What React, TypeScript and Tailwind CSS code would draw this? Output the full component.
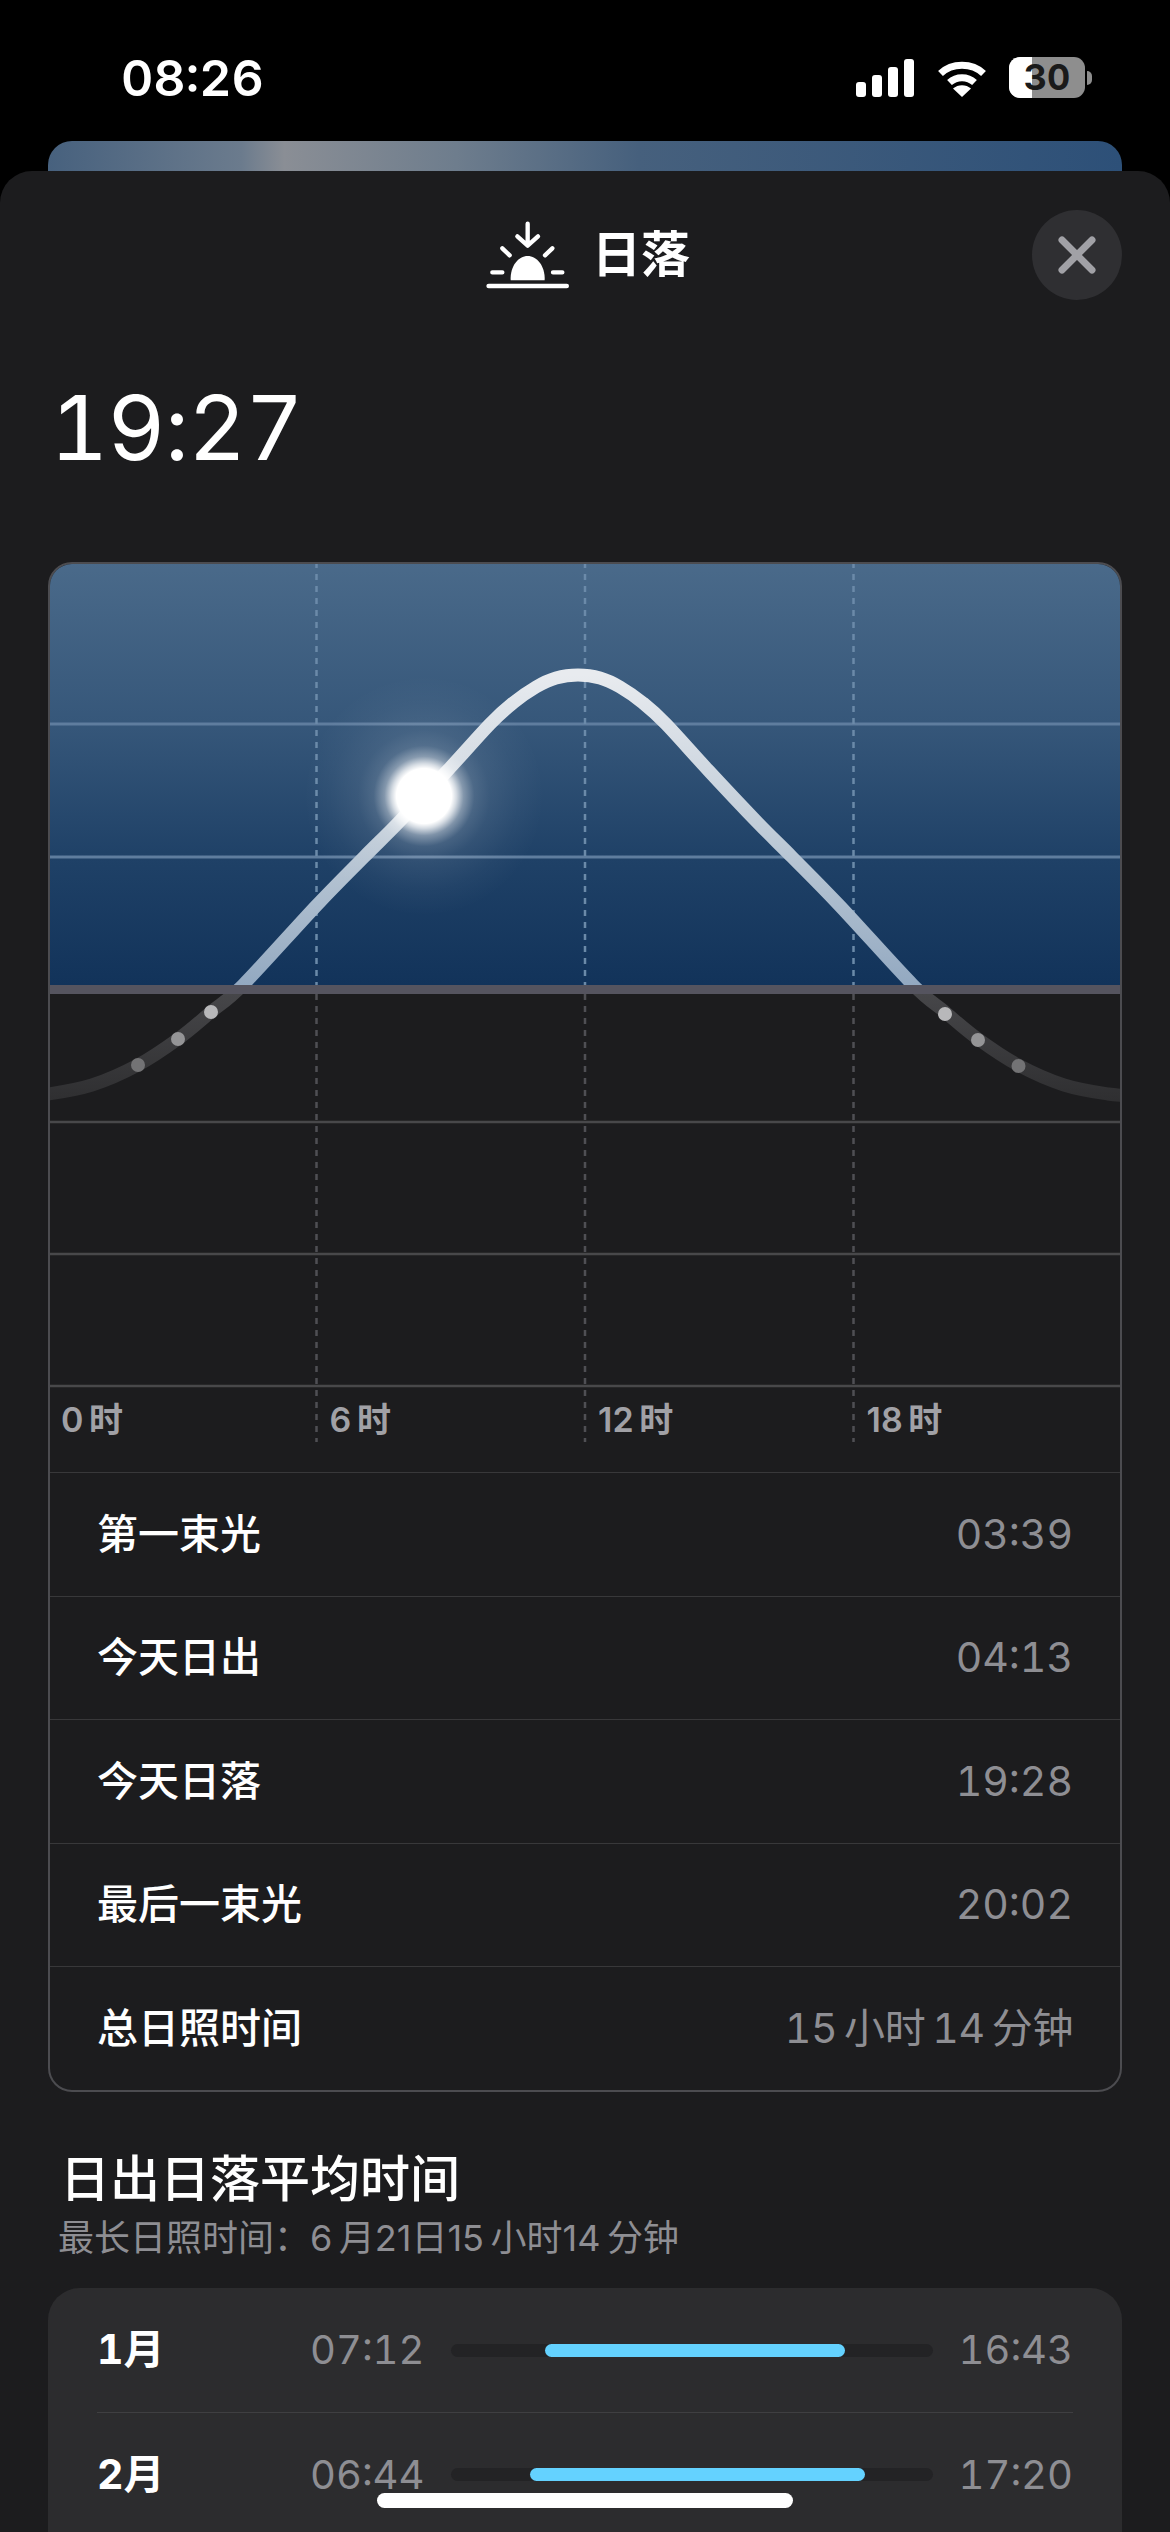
import React from "react";

const half: [number, number][] = [
  [0, 675], [22, 678], [42, 687], [65, 703], [88, 724], [130, 770], [180, 823], [214, 857], [261, 905], [335, 985], [367, 1012], [400, 1039], [440, 1065], [486, 1085], [530, 1094], [560, 1096],
];
const CX = 578;
const pts: [number, number][] = [
  ...half.slice().reverse().map(([d, y]) => [CX - d, y] as [number, number]),
  ...half.slice(1).map(([d, y]) => [CX + d, y] as [number, number]),
];
function spline(p: [number, number][]) {
  let d = `M${p[0][0]} ${p[0][1]}`;
  for (let i = 0; i < p.length - 1; i++) {
    const a = p[Math.max(i - 1, 0)], b = p[i], c = p[i + 1], e = p[Math.min(i + 2, p.length - 1)];
    d += ` C${(b[0] + (c[0] - a[0]) / 6).toFixed(1)} ${(b[1] + (c[1] - a[1]) / 6).toFixed(1)} ${(c[0] - (e[0] - b[0]) / 6).toFixed(1)} ${(c[1] - (e[1] - b[1]) / 6).toFixed(1)} ${c[0]} ${c[1]}`;
  }
  return d;
}
const curve = spline(pts);

function Chart() {
  return (
    <svg viewBox="48 562 1074 880" className="block w-[1074px] h-[880px]">
      <defs>
        <linearGradient id="sky" x1="0" y1="562" x2="0" y2="985" gradientUnits="userSpaceOnUse">
          <stop offset="0" stopColor="#4a6a8a" />
          <stop offset="0.38" stopColor="#36577a" />
          <stop offset="0.7" stopColor="#1f4167" />
          <stop offset="1" stopColor="#12335a" />
        </linearGradient>
        <linearGradient id="curveSky" x1="0" y1="675" x2="0" y2="985" gradientUnits="userSpaceOnUse">
          <stop offset="0" stopColor="#e8ebef" />
          <stop offset="0.5" stopColor="#c0ccd8" />
          <stop offset="1" stopColor="#93a9c1" />
        </linearGradient>
        <linearGradient id="curveLow" x1="0" y1="985" x2="0" y2="1100" gradientUnits="userSpaceOnUse">
          <stop offset="0" stopColor="#48484b" />
          <stop offset="1" stopColor="#2f2f31" />
        </linearGradient>
        <radialGradient id="glow" cx="424" cy="796" r="120" gradientUnits="userSpaceOnUse">
          <stop offset="0.23" stopColor="#ffffff" stopOpacity="1" />
          <stop offset="0.27" stopColor="#ffffff" stopOpacity="0.8" />
          <stop offset="0.33" stopColor="#ffffff" stopOpacity="0.42" />
          <stop offset="0.42" stopColor="#ffffff" stopOpacity="0.16" />
          <stop offset="0.55" stopColor="#ffffff" stopOpacity="0.08" />
          <stop offset="0.78" stopColor="#ffffff" stopOpacity="0.03" />
          <stop offset="1" stopColor="#ffffff" stopOpacity="0" />
        </radialGradient>
        <clipPath id="skyClip"><rect x="48" y="562" width="1074" height="423" /></clipPath>
        <clipPath id="lowClip"><rect x="48" y="985" width="1074" height="200" /></clipPath>
      </defs>
      <rect x="48" y="562" width="1074" height="423" fill="url(#sky)" />
      <rect x="48" y="562" width="1074" height="1.5" fill="#6c87a3" />
      {[724, 857].map((y) => <rect key={y} x="48" y={y - 1.5} width="1074" height="3" fill="#5f7d9e" />)}
      {[1122, 1254, 1386].map((y) => <rect key={y} x="48" y={y - 1.25} width="1074" height="2.5" fill="#48484a" />)}
      {[316.5, 585, 853.5].map((x) => (
        <g key={x}>
          <line x1={x} x2={x} y1="562" y2="985" stroke="#6b8aa9" strokeWidth="2.5" strokeDasharray="6 6" />
          <line x1={x} x2={x} y1="994" y2="1442" stroke="#4f4f54" strokeWidth="2.5" strokeDasharray="6 6" />
        </g>
      ))}
      <path d={curve} fill="none" stroke="url(#curveSky)" strokeWidth="13" clipPath="url(#skyClip)" />
      <path d={curve} fill="none" stroke="url(#curveLow)" strokeWidth="13" clipPath="url(#lowClip)" />
      <rect x="48" y="985" width="1074" height="9" fill="#55545f" />
      <circle cx="138" cy="1065" r="7" fill="#737375" />
      <circle cx="178" cy="1039" r="7" fill="#949496" />
      <circle cx="211" cy="1012" r="7" fill="#b8b8ba" />
      <circle cx="945" cy="1014" r="7" fill="#b8b8ba" />
      <circle cx="978" cy="1040" r="7" fill="#949496" />
      <circle cx="1018.5" cy="1066" r="7" fill="#737375" />
      <circle cx="424" cy="796" r="120" fill="url(#glow)" />
      <circle cx="424" cy="796" r="27.5" fill="#ffffff" />
    </svg>
  );
}

function SunsetIcon() {
  return (
    <svg viewBox="80 84 252 207" className="w-[84px] h-[69px]" fill="none" stroke="#ffffff" strokeLinecap="round" strokeLinejoin="round">
      <path d="M205 92V155M174 130L205 158L236 130" strokeWidth="13" />
      <path d="M129 166L151 187M279 166L257 187M99 238H129M281 238H309" strokeWidth="13" />
      <path d="M88 279H322" strokeWidth="14" />
      <path d="M154 262C152 218 178 189 205 189C232 189 258 218 256 262Z" fill="#ffffff" stroke="none" />
    </svg>
  );
}

function StatusIcons() {
  return (
    <div className="flex items-center">
      <svg viewBox="0 0 58 38" className="w-[58px] h-[38px]" fill="#ffffff">
        <rect x="0" y="23" width="10" height="15" rx="3" />
        <rect x="16" y="16" width="10" height="22" rx="3" />
        <rect x="32" y="8" width="10" height="30" rx="3" />
        <rect x="48" y="0" width="10" height="38" rx="3" />
      </svg>
      <svg viewBox="0 0 50 38" className="w-[50px] h-[38px] ml-[23px]" fill="none" stroke="#ffffff" strokeWidth="7">
        <path d="M3.5 14.5C15 3.5 35 3.5 46.500 14.500" />
        <path d="M12.500 23.500C19.500 17 30.500 17 37.500 23.500" />
        <path d="M25 38L16 29.500C21 25 29 25 34 29.500Z" fill="#ffffff" stroke="none" />
      </svg>
      <div className="relative ml-[22px] w-[76px] h-[41px] rounded-[11px] bg-[#8e8e8e] flex items-center justify-center">
        <div className="absolute left-0 top-0 bottom-0 w-[23px] rounded-l-[11px] bg-white" />
        <span className="relative text-[36px] leading-[41px] font-bold text-[#1a1a1a]">30</span>
      </div>
      <div className="ml-[2px] w-[5px] h-[14px] rounded-r-full bg-[#8e8e8e]" />
    </div>
  );
}

const rows: [string, string, string][] = [
  ["第一束光", "03:39", ""],
  ["今天日出", "04:13", ""],
  ["今天日落", "19:28", ""],
  ["最后一束光", "20:02", ""],
  ["总日照时间", "15\u2009小时\u200914\u2009分钟", "tracking-[-0.4px]"],
];

const months = [
  { m: "1月", a: "07:12", b: "16:43", bar: "ml-[94px] w-[300px]" },
  { m: "2月", a: "06:44", b: "17:20", bar: "ml-[79px] w-[335px]" },
];

export default function App() {
  return (
    <div className="relative w-[1170px] h-[2532px] overflow-hidden bg-black flex flex-col text-white tabular-nums font-[Inter,'Noto_Sans_CJK_SC',sans-serif]">
      <div className="h-[141px] shrink-0 flex items-start justify-between pl-[121px] pr-[78px]">
        <div className="mt-[48px] h-[60px] text-[50px] leading-[60px] font-semibold">08:26</div>
        <div className="mt-[57px]"><StatusIcons /></div>
      </div>
      <div className="mx-[48px] h-[30px] shrink-0 rounded-t-[24px] bg-[linear-gradient(90deg,#47617e_0%,#6b7b8d_18%,#8a8e95_22%,#6e7d8d_38%,#46607d_55%,#2d5078_100%)]" />
      <div className="flex-1 rounded-t-[32px] bg-[#1c1c1e] flex flex-col">
        <div className="relative mt-[39px] h-[90px] shrink-0 flex items-center justify-center pl-[6px] gap-[22px]">
          <SunsetIcon />
          <span className="text-[49px] leading-[60px] font-semibold">日落</span>
          <div className="absolute right-[48px] top-0 w-[90px] h-[90px] rounded-full bg-[#2f2f32] flex items-center justify-center">
            <svg viewBox="0 0 38 38" className="w-[38px] h-[38px]" fill="none" stroke="#a1a1a6" strokeWidth="7" strokeLinecap="round">
              <path d="M4 4L34 34M34 4L4 34" />
            </svg>
          </div>
        </div>
        <div className="mt-[73px] pl-[50px] h-[110px] text-[90px] leading-[110px] font-normal tracking-[-1px]">19:27</div>
        <div className="mx-[48px] mt-[79px] h-[1530px] shrink-0 rounded-[24px] border-[2px] border-[#4c4c50] overflow-hidden">
          <div className="relative -m-[2px] h-[912px]">
            <Chart />
            <div className="absolute left-0 right-0 bottom-[34px] h-[40px] grid grid-cols-4 text-[34px] leading-[40px] font-semibold text-[#a1a1a6] normal-nums">
              {["0\u2009时", "6\u2009时", "12\u2009时", "18\u2009时"].map((t) => <div key={t} className="pl-[13px]">{t}</div>)}
            </div>
          </div>
          {rows.map(([k, v, extra]) => (
            <div key={k} className="h-[123.600px] flex items-center justify-between px-[47px] border-t-[1.500px] border-[#38383a]">
              <span className="text-[41px] font-medium">{k}</span>
              <span className={`text-[41px] text-[#8e8e93] ${extra}`}>{v}</span>
            </div>
          ))}
        </div>
        <div className="mt-[57px] pl-[60px] text-[50px] leading-[60px] font-medium">日出日落平均时间</div>
        <div className="mt-[3px] pl-[58px] text-[36px] leading-[52px] text-[#8e8e93] normal-nums">{"最长日照时间：6\u2009月21日15\u2009小时14\u2009分钟"}</div>
        <div className="mx-[48px] mt-[24px] flex-1 rounded-t-[32px] bg-[#2c2c2e] px-[49px]">
          {months.map((r, i) => (
            <div key={r.m} className={`h-[124px] flex items-center ${i > 0 ? "border-t-[1.500px] border-[#3f3f41]" : ""}`}>
              <span className="w-[213px] text-[41px] font-bold">{r.m}</span>
              <span className="w-[114px] text-[40px] text-[#8e8e93]">{r.a}</span>
              <div className="ml-[27px] w-[482px] h-[13px] rounded-full bg-[#232325] flex">
                <div className={`h-[13px] rounded-full bg-[#64d2ff] ${r.bar}`} />
              </div>
              <span className="ml-auto text-[40px] text-[#8e8e93]">{r.b}</span>
            </div>
          ))}
        </div>
      </div>
      <div className="absolute left-[377px] top-[2493px] w-[416px] h-[15px] rounded-full bg-white" />
    </div>
  );
}
